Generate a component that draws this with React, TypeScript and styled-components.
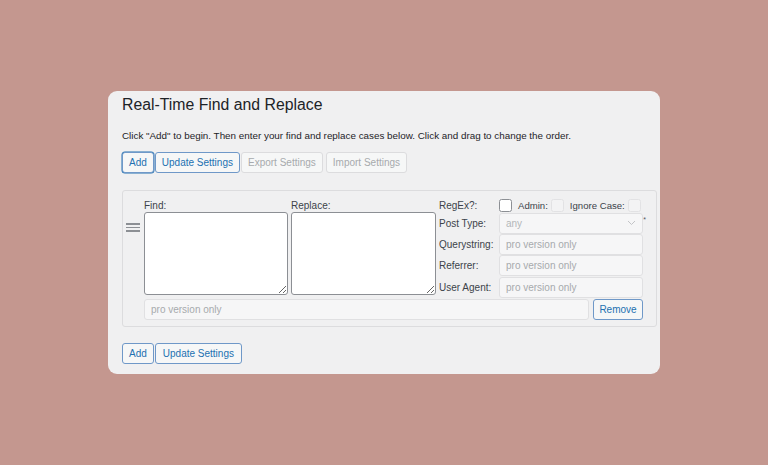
import styled, { createGlobalStyle } from 'styled-components';

const GlobalStyle = createGlobalStyle`
  html, body {
    margin: 0;
    padding: 0;
    background: #c4978f;
  }
  body {
    font-family: "Liberation Sans", Arial, sans-serif;
    color: #1d2327;
  }
`;

const Page = styled.div`
  width: 768px;
  height: 465px;
  padding: 91px 0 0 108px;
  box-sizing: border-box;
`;

const Card = styled.div`
  width: 552px;
  height: 283px;
  box-sizing: border-box;
  background: #f0f0f1;
  border-radius: 9px;
  padding: 3px 3px 0 14px;
`;

const Title = styled.h1`
  margin: 0;
  font-size: 15.8px;
  font-weight: 400;
  line-height: 22px;
  color: #1d2327;
`;

const Intro = styled.p`
  margin: 13px 0 0;
  font-size: 9.85px;
  line-height: 14px;
  color: #1d2327;
`;

const ButtonRow = styled.div`
  display: flex;
  gap: 1px;
  margin-top: 9px;
  height: 21px;
`;

const Button = styled.button<{ $disabled?: boolean; $focus?: boolean }>`
  font-family: inherit;
  font-size: 10px;
  height: 21px;
  padding: 0 6px;
  border-radius: 3px;
  background: #f6f7f7;
  cursor: pointer;
  border: 1px solid ${(p) => (p.$disabled ? '#dcdcde' : '#6f98c8')};
  color: ${(p) => (p.$disabled ? '#a7aaad' : '#2271b1')};
  box-shadow: ${(p) => (p.$focus ? '0 0 0 0.5px #2271b1' : 'none')};
  & + &[data-wide] {
    padding: 0 7px;
  }
  & + &[data-last] {
    margin-left: 2px;
  }
`;

const Panel = styled.div`
  margin-top: 17px;
  width: 535px;
  height: 137px;
  box-sizing: border-box;
  border: 1px solid #dcdcde;
  border-radius: 3px;
  padding: 8px 13px 0 3px;
  display: grid;
  grid-template-columns: 15px 144px 145px 204px;
  column-gap: 3px;
  row-gap: 0;
  align-items: start;
  align-content: start;
`;

const Handle = styled.div`
  padding-top: 24px;
  display: flex;
  flex-direction: column;
  gap: 2px;
  span {
    display: block;
    height: 1.5px;
    width: 14px;
    background: #8c8f94;
  }
`;

const Field = styled.div`
  display: flex;
  flex-direction: column;
`;

const Label = styled.label`
  font-size: 10px;
  line-height: 13px;
  color: #3c434a;
  white-space: nowrap;
`;

const TextArea = styled.textarea`
  height: 83px;
  width: 100%;
  box-sizing: border-box;
  border: 1px solid #8c8f94;
  border-radius: 3px;
  background: #fff;
  resize: both;
  font-family: inherit;
  margin: 0;
  display: block;
`;

const Options = styled.div`
  display: grid;
  grid-template-columns: 60px 144px;
  grid-template-rows: 13.5px repeat(4, 21.3px);
  align-items: center;
  position: relative;
`;

const CheckRow = styled.div`
  display: flex;
  align-items: center;
  height: 13px;
  align-self: start;
  ${Label} {
    font-size: 9.6px;
    margin: 0 3px 0 6px;
  }
`;

const Check = styled.span<{ $disabled?: boolean }>`
  display: inline-block;
  width: 11px;
  height: 11px;
  flex: none;
  border-radius: 2.5px;
  border: 1px solid ${(p) => (p.$disabled ? '#e2e2e4' : '#8c8f94')};
  background: ${(p) => (p.$disabled ? '#f3f3f4' : '#fff')};
`;

const Input = styled.input`
  height: 21px;
  width: 100%;
  box-sizing: border-box;
  border: 1px solid #e0e0e2;
  border-radius: 3px;
  background: #f6f6f7;
  padding: 0 6px;
  font-family: inherit;
  font-size: 10px;
  color: #a7aaad;
  margin: 0;
  display: block;
  &::placeholder {
    color: #a7aaad;
  }
`;

const SelectBox = styled.div`
  position: relative;
  height: 21px;
  box-sizing: border-box;
  border: 1px solid #e0e0e2;
  border-radius: 3px;
  background: #f6f6f7;
  padding: 0 6px;
  display: flex;
  align-items: center;
  justify-content: space-between;
  font-size: 10px;
  color: #b4b6b9;
`;

const Star = styled.span`
  position: absolute;
  right: -3px;
  top: 17px;
  font-size: 7px;
  color: #50575e;
`;

const BottomRow = styled.div`
  grid-column: 2 / 5;
  display: flex;
  gap: 4px;
  margin-top: 1px;
  ${Button} {
    width: 50px;
    padding: 0;
    flex: none;
  }
`;

const BottomButtons = styled(ButtonRow)`
  margin-top: 16px;
`;

function App() {
  return (
    <>
      <GlobalStyle />
      <Page>
        <Card>
          <Title>Real-Time Find and Replace</Title>
          <Intro>
            Click "Add" to begin. Then enter your find and replace cases below. Click and drag to change the order.
          </Intro>
          <ButtonRow>
            <Button $focus>Add</Button>
            <Button data-wide>Update Settings</Button>
            <Button $disabled>Export Settings</Button>
            <Button $disabled data-last>
              Import Settings
            </Button>
          </ButtonRow>

          <Panel>
            <Handle>
              <span />
              <span />
              <span />
            </Handle>
            <Field>
              <Label>Find:</Label>
              <TextArea />
            </Field>
            <Field>
              <Label>Replace:</Label>
              <TextArea />
            </Field>
            <Options>
              <Label>RegEx?:</Label>
              <CheckRow>
                <Check />
                <Label>Admin:</Label>
                <Check $disabled />
                <Label>Ignore Case:</Label>
                <Check $disabled />
              </CheckRow>
              <Label>Post Type:</Label>
              <SelectBox>
                <span>any</span>
                <svg width="9" height="6" viewBox="0 0 9 6">
                  <path d="M1 1l3.5 3.5L8 1" fill="none" stroke="#c3c4c7" strokeWidth="1" />
                </svg>
              </SelectBox>
              <Label>Querystring:</Label>
              <Input placeholder="pro version only" disabled />
              <Label>Referrer:</Label>
              <Input placeholder="pro version only" disabled />
              <Label>User Agent:</Label>
              <Input placeholder="pro version only" disabled />
              <Star>*</Star>
            </Options>
            <BottomRow>
              <Input placeholder="pro version only" disabled />
              <Button>Remove</Button>
            </BottomRow>
          </Panel>

          <BottomButtons>
            <Button>Add</Button>
            <Button data-wide>Update Settings</Button>
          </BottomButtons>
        </Card>
      </Page>
    </>
  );
}

export default App;
